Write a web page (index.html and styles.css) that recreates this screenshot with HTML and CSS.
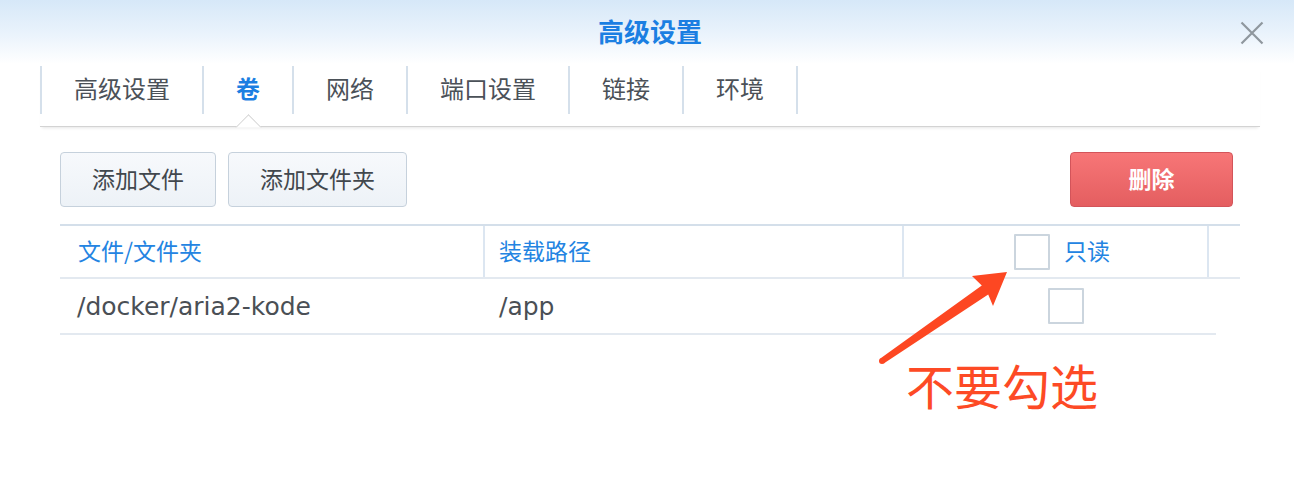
FILE: index.html
```html
<!DOCTYPE html>
<html lang="zh-CN">
<head>
<meta charset="utf-8">
<title>高级设置</title>
<link rel="stylesheet" href="styles.css">
</head>
<body>
<div class="dialog">
  <header class="titlebar">
    <h1 class="title">高级设置</h1>
    <button class="close" aria-label="关闭">
      <svg width="24" height="24" viewBox="0 0 24 24"><path d="M1.5 1.5 L22.5 22.5 M22.5 1.5 L1.5 22.5" stroke="#8f979e" stroke-width="2.2" fill="none"/></svg>
    </button>
  </header>

  <nav class="tabbar">
    <div class="tab">高级设置</div>
    <div class="tab tab-active">卷</div>
    <div class="tab">网络</div>
    <div class="tab">端口设置</div>
    <div class="tab">链接</div>
    <div class="tab">环境</div>
  </nav>

  <div class="toolbar">
    <div class="btn-group">
      <button class="btn">添加文件</button>
      <button class="btn">添加文件夹</button>
    </div>
    <button class="btn btn-danger">删除</button>
  </div>

  <div class="grid">
    <div class="grid-head">
      <div class="cell cell-first">文件/文件夹</div>
      <div class="cell cell-divided">装载路径</div>
      <div class="cell cell-divided cell-check-head">
        <span class="checkbox"></span>
        <span class="check-label">只读</span>
      </div>
      <div class="cell cell-divided"></div>
    </div>
    <div class="grid-row">
      <div class="cell cell-first-body">/docker/aria2-kode</div>
      <div class="cell cell-second-body">/app</div>
      <div class="cell cell-check-body"><span class="checkbox"></span></div>
    </div>
  </div>

  <div class="annotation">
    <svg class="arrow" width="150" height="110" viewBox="0 0 150 110">
      <polygon points="10.3,98.6 111.8,25.5 102,16 137,12 123,46 118.2,34.5 13.7,103.4" fill="#fd4722"/>
      <circle cx="12" cy="101" r="3" fill="#fd4722"/>
    </svg>
    <div class="note">不要勾选</div>
  </div>
</div>
</body>
</html>
```

FILE: styles.css
```css
html, body {
  margin: 0;
  padding: 0;
}

body {
  width: 1294px;
  height: 482px;
  overflow: hidden;
  background: #ffffff;
  font-family: "Noto Sans CJK SC", "DejaVu Sans", sans-serif;
}

.dialog {
  position: relative;
  width: 1294px;
  height: 482px;
}

/* Title bar */
.titlebar {
  height: 66px;
  display: grid;
  grid-template-columns: 1fr auto 1fr;
  align-items: center;
  background: linear-gradient(#d6e8f8 0px, #eaf3fc 34px, #ffffff 64px);
}

.title {
  grid-column: 2;
  margin: 0 0 4px 0;
  font-size: 26px;
  line-height: 1;
  font-weight: 700;
  color: #1b7fe2;
  padding-left: 6px;
}

.close {
  grid-column: 3;
  justify-self: end;
  margin-right: 30px;
  width: 24px;
  height: 24px;
  padding: 0;
  border: 0;
  background: none;
  display: flex;
}

/* Tabs */
.tabbar {
  display: flex;
  margin: 0 34px 0 40px;
  padding-bottom: 12px;
  border-bottom: 1px solid #d3d3d3;
  box-shadow: 0 3px 3px -2px rgba(0, 0, 0, 0.10);
  position: relative;
}

.tab {
  position: relative;
  height: 48px;
  line-height: 44px;
  padding: 0 32px 4px;
  box-sizing: border-box;
  border-left: 2px solid #d5e0eb;
  font-size: 24px;
  color: #4b5158;
}

.tab:last-child {
  border-right: 2px solid #d5e0eb;
}

.tab-active {
  color: #1b7fe2;
  font-weight: 700;
}

.tab-active::after {
  content: "";
  position: absolute;
  left: calc(50% - 9px);
  top: 52px;
  width: 18px;
  height: 18px;
  background: #ffffff;
  border-top: 1px solid #cfcfcf;
  border-left: 1px solid #cfcfcf;
  transform: rotate(45deg);
  clip-path: polygon(0 0, 100% 0, 0 100%);
  z-index: 2;
}

/* Toolbar */
.toolbar {
  display: flex;
  justify-content: space-between;
  margin: 25px 61px 0 60px;
}

.btn-group {
  display: flex;
  gap: 12px;
}

.btn {
  height: 55px;
  padding: 0 31px 3px;
  border: 1px solid #c6d1dc;
  border-radius: 4px;
  background: linear-gradient(#f7f9fc, #edf2f7);
  font-family: "Noto Sans CJK SC", sans-serif;
  font-size: 23px;
  color: #41474d;
}

.btn-danger {
  width: 163px;
  padding: 0 0 3px;
  border-color: #d3545a;
  background: linear-gradient(#f77677, #e45e60);
  color: #ffffff;
  font-weight: 700;
}

/* Grid */
.grid {
  margin: 17px 0 0 60px;
  width: 1180px;
}

.grid-head {
  display: grid;
  grid-template-columns: 423px 419px 305px 1fr;
  height: 51px;
  border-top: 2px solid #d4dfea;
  border-bottom: 2px solid #e3e9f0;
}

.cell {
  display: flex;
  align-items: center;
  font-size: 23px;
  box-sizing: border-box;
}

.grid-head .cell {
  color: #2384e2;
  padding-bottom: 3px;
}

.cell-first {
  padding-left: 18px;
}

.cell-divided {
  border-left: 2px solid #dce6f1;
  padding-left: 14px;
}

.grid-head .cell-check-head {
  justify-content: center;
  padding-left: 13px;
  padding-bottom: 0;
  gap: 14px;
}

.check-label {
  font-size: 23px;
  margin-top: -3px;
}

.checkbox {
  display: block;
  width: 32px;
  height: 32px;
  border: 2px solid #cbd5de;
  background: #ffffff;
  border-radius: 1px;
}

.grid-row {
  display: grid;
  grid-template-columns: 423px 419px 314px;
  width: 1156px;
  height: 54px;
  border-bottom: 2px solid #e3e9f0;
}

.grid-row .cell {
  font-family: "DejaVu Sans", sans-serif;
  font-size: 25px;
  color: #4a4f55;
}

.cell-first-body {
  padding-left: 17px;
}

.cell-second-body {
  padding-left: 16px;
}

.cell-check-body {
  justify-content: center;
  padding-left: 14px;
}

/* Annotation overlay */
.annotation {
  position: absolute;
  left: 870px;
  top: 260px;
  width: 260px;
  height: 170px;
  pointer-events: none;
}

.arrow {
  position: absolute;
  left: 0;
  top: 0;
}

.note {
  position: absolute;
  left: 36px;
  top: 100px;
  font-size: 48px;
  line-height: 1;
  font-weight: 400;
  color: #fd4a25;
  white-space: nowrap;
}
```
